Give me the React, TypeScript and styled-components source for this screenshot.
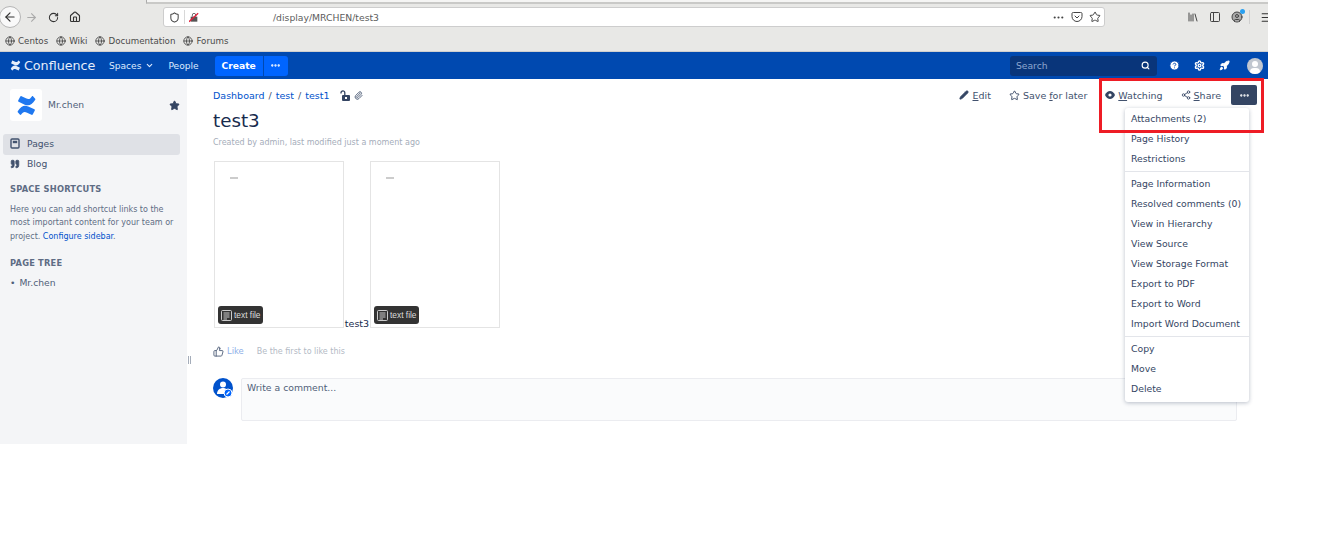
import React from "react";
import styled, { createGlobalStyle } from "styled-components";
import {
  ArrowLeft, ArrowRight, RotateCw, Home, Globe, Star, Search, Pencil, Share2, Ellipsis, Paperclip,
  ThumbsUp, ChevronDown, Library, PanelLeft, Menu, CircleHelp, Settings, Rocket, Quote, Shield, Pocket, CircleUser,
} from "lucide-react";

const Global = createGlobalStyle`
  html, body { margin: 0; padding: 0; background: #fff; }
  body { font-family: "DejaVu Sans", sans-serif; color: #253858; overflow: hidden; }
  * { box-sizing: border-box; }
`;
const Page = styled.div`
  position: relative; width: 1268px; height: 547px; display: flex; flex-direction: column;
`;
const Chrome = styled.header`
  height: 52px; background: #e8e8e6; display: flex; flex-direction: column; flex: none; color: #3a3a3a;
  border-bottom: 1px solid #cfcfcf; overflow: hidden;
`;
const TabEdge = styled.div`
  height: 4px; margin-left: 146px; border-left: 1px solid #aaa; border-bottom: 2px solid #c9c9c7; background: #f5f5f4;
`;
const Toolbar = styled.div`
  height: 26px; display: flex; align-items: center; position: relative;
`;
const BackBtn = styled.div`
  width: 22px; height: 22px; margin-left: -1px; border-radius: 50%; background: #f9f9f9; border: 1px solid #b5b5b5;
  display: flex; align-items: center; justify-content: center; flex: none;
`;
const NavIcon = styled.span<{ $ml: number }>`
  display: flex; margin-left: ${(p) => p.$ml}px; flex: none;
`;
const UrlBar = styled.div`
  margin-left: 82px; width: 942px; height: 20px; flex: none; background: #fff; border: 1px solid #cdcdcd; border-radius: 3px;
  display: flex; align-items: center; padding-left: 5px; font-size: 9.25px; color: #555;
`;
const UrlSep = styled.span`width: 1px; height: 14px; background: #d8d8d8; margin: 0 4px 0 4px;`;
const UrlText = styled.span`margin-left: 74px; flex: 1; color: #5c5c5c;`;
const UrlActions = styled.span`display: flex; align-items: center; gap: 6px; margin-right: 3px;`;
const RightTools = styled.div`display: flex; align-items: center; margin-left: 82px; gap: 10px; flex: none;`;
const Account = styled.span`
  position: relative; display: flex;
  &::after { content: ""; position: absolute; top: -2px; right: -2px; width: 5px; height: 5px; border-radius: 50%; background: #2aa0f0; }
`;
const ToolSep = styled.span`width: 1px; height: 14px; background: #cfcfcf; margin-left: -4px;`;
const Bookmarks = styled.div`
  height: 21px; display: flex; align-items: center; padding-left: 5px; gap: 8px; font-size: 8.7px; color: #4a4a4a;
`;
const Bookmark = styled.span`display: flex; align-items: center; gap: 3px;`;

const TopBar = styled.nav`
  height: 27px; flex: none; background: #0049b0; display: flex; align-items: center; color: #deebff; font-size: 9.1px;
`;
const Logo = styled.div`
  display: flex; align-items: center; margin-left: 10px; color: #e6eefb; font-size: 12.7px; gap: 3px; width: 99px; flex: none;
`;
const NavItem = styled.span<{ $ml?: number }>`display: flex; align-items: center; gap: 4px; color: #deebff; margin-left: ${(p) => p.$ml ?? 0}px;`;
const CreateGroup = styled.div`display: flex; margin-left: 16px; gap: 1px; height: 20px;`;
const CreateBtn = styled.div`
  width: 48px; background: #0065ff; color: #fff; font-weight: 700; font-size: 9.2px; border-radius: 3px 0 0 3px; display: flex; align-items: center; justify-content: center;
`;
const CreateMore = styled.div`
  width: 24px; background: #0065ff; color: #fff; border-radius: 0 3px 3px 0; display: flex; align-items: center; justify-content: center;
`;
const SearchBox = styled.div`
  margin-left: auto; width: 147px; height: 20px; background: #09357a; border-radius: 3px; color: #8da6cf; display: flex; align-items: center;
  justify-content: space-between; padding: 0 7px 1px 6px; font-size: 9.2px;
`;
const TopIcons = styled.div`display: flex; align-items: center; gap: 14px; margin: 0 5px 0 12px; color: #fff;`;
const Avatar = styled.div`
  width: 16px; height: 16px; border-radius: 50%; background: #c1c7d0; overflow: hidden; position: relative; margin-left: 3px;
  &::before { content: ""; position: absolute; left: 5px; top: 3px; width: 6px; height: 6px; border-radius: 50%; background: #fff; }
  &::after { content: ""; position: absolute; left: 3px; top: 10px; width: 10px; height: 8px; border-radius: 4px; background: #fff; }
`;

const Body = styled.div`display: flex; flex: none; height: 365px;`;
const Sidebar = styled.aside`
  width: 187px; flex: none; background: #f4f5f7; position: relative; padding: 10px 7px 0 3px; font-size: 9px; color: #42526e;
`;
const SpaceHead = styled.div`display: flex; align-items: center; padding-left: 7px; height: 32px; font-size: 9.2px; color: #505f79;`;
const SpaceName = styled.span`margin-bottom: 2px;`;
const SpaceLogo = styled.div`
  width: 32px; height: 32px; background: #fff; border-radius: 3px; display: flex; align-items: center; justify-content: center; margin-right: 6px;
`;
const SpaceStar = styled.span`margin-left: auto; display: flex;`;
const SideItem = styled.div<{ $active?: boolean }>`
  height: 21px; display: flex; align-items: center; padding: 0 0 2px 7px; gap: 7px; border-radius: 3px; font-size: 9.2px; color: #42526e;
  background: ${(p) => (p.$active ? "#dfe1e6" : "transparent")};
  & + & { margin-top: -1px; }
`;
const SideNav = styled.div`margin-top: 13px; display: flex; flex-direction: column;`;
const SideHeading = styled.h4<{ $mt: number }>`
  margin: ${(p) => p.$mt}px 0 0; font-size: 8.3px; font-weight: 700; color: #5e6c84; letter-spacing: 0.2px; padding-left: 7px; line-height: 12px;
`;
const SideText = styled.p`
  margin: 8px 0 0; padding-left: 7px; font-size: 8px; line-height: 13.3px; color: #5e6c84; white-space: nowrap;
`;
const Anchor = styled.span`color: #0052cc;`;
const TreeItem = styled.div`margin-top: 8px; padding-left: 7px; font-size: 9.2px; line-height: 11px; color: #505f79; display: flex; align-items: center; gap: 4px;`;
const Grip = styled.span`position: absolute; right: -4px; top: 277px; width: 3px; height: 8px; border-left: 1px solid #a5adba; border-right: 1px solid #a5adba;`;

const Main = styled.main`flex: 1; padding: 9px 11px 0 26px; position: relative;`;
const HeadRow = styled.div`display: flex; align-items: center; height: 14px; justify-content: space-between;`;
const Crumbs = styled.div`display: flex; align-items: center; font-size: 9.5px; color: #42526e; gap: 4px;`;
const CrumbLink = styled.span`color: #0052cc;`;
const CrumbIcons = styled.span`display: flex; align-items: center; gap: 4px; margin-left: 6px;`;
const PageActions = styled.div`display: flex; align-items: center; font-size: 9.5px; color: #42526e;`;
const ActionItem = styled.span<{ $ml: number }>`display: flex; align-items: center; gap: 3px; margin-left: ${(p) => p.$ml}px; u { text-underline-offset: 1px; }`;
const MoreBtn = styled.span`
  width: 26px; height: 20px; background: #344563; border-radius: 2px; margin-left: 10px; color: #fff; display: flex; align-items: center; justify-content: center;
`;
const Title = styled.h1`margin: 5px 0 0; font-size: 18.3px; font-weight: 400; color: #172b4d; line-height: 28px;`;
const Meta = styled.div`margin-top: 2px; font-size: 8px; color: #a5adba; line-height: 11px;`;
const Files = styled.div`display: flex; align-items: flex-end; margin-top: 13px; margin-left: 1px; height: 167px; font-size: 9.5px; color: #172b4d;`;
const FileCard = styled.div`
  width: 130px; height: 167px; border: 1px solid #e4e4e4; background: #fff; position: relative; flex: none;
`;
const Dash = styled.span`position: absolute; left: 15px; top: 15px; width: 8px; height: 2px; background: #ccc;`;
const FileBadge = styled.div`
  position: absolute; left: 3px; bottom: 3px; width: 45px; height: 18px; background: #333; border-radius: 3px; color: #ddd; font-size: 8.4px;
  font-family: "Liberation Sans", sans-serif; display: flex; align-items: center; padding-left: 3px; gap: 2px;
`;
const Caption = styled.span`width: 26px; text-align: center; line-height: 9px;`;
const LikeRow = styled.div`display: flex; align-items: center; margin-top: 17px; height: 12px; font-size: 8.4px; color: #a5adba;`;
const LikeLink = styled.span`margin-left: 3px; color: #8eb0e8;`;
const LikeText = styled.span`margin-left: 13px; color: #b3bac5; font-size: 8px;`;
const CommentRow = styled.div`display: flex; margin-top: 21px; padding-right: 20px;`;
const CommentAvatar = styled.div`flex: none; width: 20px; height: 20px; margin-right: 8px;`;
const CommentBox = styled.div`
  flex: 1; height: 43px; border: 1px solid #ebecf0; border-radius: 2px; background: #fafbfc; padding: 3px 5px; font-size: 9.3px; color: #505f79;
`;

const Menu2 = styled.div`
  position: absolute; left: 1125px; top: 108px; width: 124px; height: 294px; background: #fff; border-radius: 3px;
  box-shadow: 0 1px 4px rgba(9,30,66,.28); display: flex; flex-direction: column; padding-top: 1px; z-index: 2;
`;
const MenuGroup = styled.div`
  padding: 0 0 2px; & + & { border-top: 1px solid #e3e5ea; padding-top: 2px; }
`;
const MenuItem = styled.div`height: 20px; line-height: 20px; padding-left: 6px; font-size: 9.3px; color: #344563; white-space: nowrap;`;
const Highlight = styled.div`
  position: absolute; left: 1099px; top: 78px; width: 165px; height: 55px; border: 3px solid #ee1c25; z-index: 3;
`;

const MENU = [
  ["Attachments (2)", "Page History", "Restrictions"],
  ["Page Information", "Resolved comments (0)", "View in Hierarchy", "View Source", "View Storage Format", "Export to PDF", "Export to Word", "Import Word Document"],
  ["Copy", "Move", "Delete"],
];

const ConfluenceMark = ({ size, color }: { size: number; color: string }) => (
  <svg width={size} height={size} viewBox="0 0 24 24" fill={color}>
    <path d="M2 18.5c4-6 7.5-7.5 12-5.5l7 3.2c.6.3.8.9.5 1.4l-2.4 4.6c-.3.5-.9.7-1.4.4l-5-2.4c-3.5-1.6-4.8-.6-6.8 2.2-.3.4-.9.5-1.3.2L2.3 20c-.5-.3-.6-1-.3-1.5z" />
    <path d="M22 5.5c-4 6-7.5 7.5-12 5.5L3 7.8c-.6-.3-.8-.9-.5-1.4l2.4-4.6c.3-.5.9-.7 1.4-.4l5 2.4c3.5 1.6 4.8.6 6.8-2.2.3-.4.9-.5 1.3-.2L21.7 4c.5.3.6 1 .3 1.5z" />
  </svg>
);
const PagesIcon = () => (
  <svg width="10" height="11" viewBox="0 0 10 11" fill="none">
    <rect x="1" y="1" width="8" height="9" rx="1" stroke="#42526e" strokeWidth="1.4" />
    <rect x="2.8" y="2.8" width="4.4" height="2.4" fill="#42526e" />
  </svg>
);
const LockIcon = () => (
  <svg width="10" height="11" viewBox="0 0 10 11">
    <rect x="2" y="5" width="8" height="6" rx="1" fill="#344563" />
    <rect x="5" y="7" width="2" height="2" fill="#fff" />
    <path d="M1 3.5V2.8a1.9 1.9 0 0 1 3.8 0V5" fill="none" stroke="#344563" strokeWidth="1.3" />
  </svg>
);
const EyeIcon = () => (
  <svg width="10" height="8" viewBox="0 0 10 8">
    <path d="M0 4c1.2-2.500 3-4 5-4s3.800 1.500 5 4c-1.200 2.500-3 4-5 4S1.200 6.500 0 4z" fill="#344563" />
    <circle cx="5" cy="4" r="1.600" fill="#fff" />
  </svg>
);
const TextFileIcon = () => (
  <svg width="11" height="11" viewBox="0 0 11 11" fill="none" stroke="#ddd" strokeWidth=".9">
    <rect x=".5" y=".5" width="10" height="10" rx="1" />
    <path d="M2.500 3h6M2.500 5h6M2.500 7h6M2.500 9h3.500" />
  </svg>
);

const FilePreview = () => (
  <FileCard>
    <Dash />
    <FileBadge><TextFileIcon />text file</FileBadge>
  </FileCard>
);

export default function App() {
  return (
    <Page>
      <Global />
      <Chrome>
        <TabEdge />
        <Toolbar>
          <BackBtn><ArrowLeft size={14} color="#333" /></BackBtn>
          <NavIcon $ml={4}><ArrowRight size={13} color="#aaa" /></NavIcon>
          <NavIcon $ml={10}><RotateCw size={11} color="#333" strokeWidth={2.2} /></NavIcon>
          <NavIcon $ml={10}><Home size={12} color="#333" strokeWidth={2.2} /></NavIcon>
          <UrlBar>
            <Shield size={11} color="#444" strokeWidth={2.2} />
            <UrlSep />
            <svg width="10" height="11" viewBox="0 0 12 12"><rect x="2" y="5" width="8" height="6" fill="#555" /><path d="M4 5V3a2 2 0 0 1 4 0v2" fill="none" stroke="#555" /><path d="M0 11 11 1" stroke="#e0203a" strokeWidth="1.6" /></svg>
            <UrlText>/display/MRCHEN/test3</UrlText>
            <UrlActions>
              <Ellipsis size={13} color="#444" />
              <Pocket size={12} color="#444" />
              <Star size={12} color="#444" />
            </UrlActions>
          </UrlBar>
          <RightTools>
            <Library size={12} color="#444" />
            <PanelLeft size={12} color="#444" />
            <Account><CircleUser size={12} color="#444" fill="#aaa" /></Account>
            <ToolSep />
            <Menu size={13} color="#333" />
          </RightTools>
        </Toolbar>
        <Bookmarks>
          <Bookmark><Globe size={10} color="#444" />Centos</Bookmark>
          <Bookmark><Globe size={10} color="#444" />Wiki</Bookmark>
          <Bookmark><Globe size={10} color="#444" />Documentation</Bookmark>
          <Bookmark><Globe size={10} color="#444" />Forums</Bookmark>
        </Bookmarks>
      </Chrome>
      <TopBar>
        <Logo><ConfluenceMark size={11} color="#e6eefb" />Confluence</Logo>
        <NavItem>Spaces <ChevronDown size={9} strokeWidth={3} /></NavItem>
        <NavItem $ml={14}>People</NavItem>
        <CreateGroup>
          <CreateBtn>Create</CreateBtn>
          <CreateMore><Ellipsis size={11} strokeWidth={3} /></CreateMore>
        </CreateGroup>
        <SearchBox>Search<Search size={9} color="#fff" strokeWidth={3} /></SearchBox>
        <TopIcons>
          <CircleHelp size={11} fill="#fff" color="#0049b0" />
          <Settings size={11} strokeWidth={3} />
          <Rocket size={11} fill="#fff" />
          <Avatar />
        </TopIcons>
      </TopBar>
      <Body>
        <Sidebar>
          <SpaceHead>
            <SpaceLogo><ConfluenceMark size={21} color="#1f78f0" /></SpaceLogo>
            <SpaceName>Mr.chen</SpaceName>
            <SpaceStar><Star size={11} fill="#344563" color="#344563" /></SpaceStar>
          </SpaceHead>
          <SideNav>
            <SideItem $active><PagesIcon />Pages</SideItem>
            <SideItem><Quote size={10} color="#42526e" fill="#42526e" />Blog</SideItem>
          </SideNav>
          <SideHeading $mt={8}>SPACE SHORTCUTS</SideHeading>
          <SideText>Here you can add shortcut links to the<br />most important content for your team or<br />project. <Anchor>Configure sidebar</Anchor>.</SideText>
          <SideHeading $mt={14}>PAGE TREE</SideHeading>
          <TreeItem><span>•</span><span>Mr.chen</span></TreeItem>
          <Grip />
        </Sidebar>
        <Main>
          <HeadRow>
            <Crumbs>
              <CrumbLink>Dashboard</CrumbLink> / <CrumbLink>test</CrumbLink> / <CrumbLink>test1</CrumbLink>
              <CrumbIcons>
                <LockIcon />
                <Paperclip size={9} color="#505f79" strokeWidth={2.5} />
              </CrumbIcons>
            </Crumbs>
            <PageActions>
              <ActionItem $ml={0}><Pencil size={10} color="#344563" fill="#344563" /><span><u>E</u>dit</span></ActionItem>
              <ActionItem $ml={18}><Star size={11} color="#344563" /><span>Save <u>f</u>or later</span></ActionItem>
              <ActionItem $ml={18}><EyeIcon /><span><u>W</u>atching</span></ActionItem>
              <ActionItem $ml={18}><Share2 size={10} color="#344563" /><span><u>S</u>hare</span></ActionItem>
              <MoreBtn><Ellipsis size={11} strokeWidth={3} /></MoreBtn>
            </PageActions>
          </HeadRow>
          <Title>test3</Title>
          <Meta>Created by admin, last modified just a moment ago</Meta>
          <Files>
            <FilePreview />
            <Caption>test3</Caption>
            <FilePreview />
          </Files>
          <LikeRow>
            <ThumbsUp size={11} color="#505f79" />
            <LikeLink>Like</LikeLink>
            <LikeText>Be the first to like this</LikeText>
          </LikeRow>
          <CommentRow>
            <CommentAvatar>
              <svg width="20" height="20" viewBox="0 0 20 20">
                <circle cx="10" cy="10" r="10" fill="#0052cc" />
                <circle cx="10" cy="6.500" r="3" fill="#fff" />
                <path d="M4 16c0-4 3-6 6-6s6 2 6 6z" fill="#fff" />
                <circle cx="15" cy="15" r="4" fill="#0065ff" stroke="#fff" strokeWidth="1" />
                <path d="M13.500 16.500l3-3" stroke="#fff" strokeWidth="1.200" />
              </svg>
            </CommentAvatar>
            <CommentBox>Write a comment...</CommentBox>
          </CommentRow>
        </Main>
      </Body>
      <Menu2>
        {MENU.map((g, i) => (
          <MenuGroup key={i}>
            {g.map((t) => <MenuItem key={t}>{t}</MenuItem>)}
          </MenuGroup>
        ))}
      </Menu2>
      <Highlight />
    </Page>
  );
}
